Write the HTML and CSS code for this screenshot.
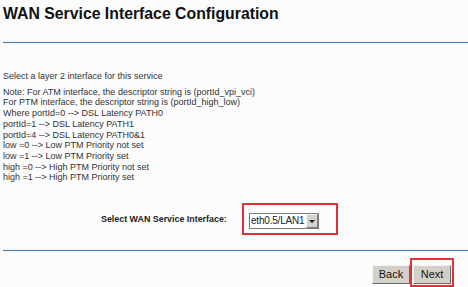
FILE: index.html
```html
<!DOCTYPE html>
<html lang="en">
<head>
  <meta charset="UTF-8">
  <title>WAN Service Interface Configuration</title>
  <link rel="stylesheet" href="styles.css">
</head>
<body>
  <h1 class="title">WAN Service Interface Configuration</h1>
  <div class="rule"></div>

  <div class="notes">
    <p class="lead">Select a layer 2 interface for this service</p>
    <p>Note: For ATM interface, the descriptor string is (portId_vpi_vci)</p>
    <p>For PTM interface, the descriptor string is (portId_high_low)</p>
    <p>Where portId=0 --&gt; DSL Latency PATH0</p>
    <p>portId=1 --&gt; DSL Latency PATH1</p>
    <p>portId=4 --&gt; DSL Latency PATH0&amp;1</p>
    <p>low =0 --&gt; Low PTM Priority not set</p>
    <p>low =1 --&gt; Low PTM Priority set</p>
    <p>high =0 --&gt; High PTM Priority not set</p>
    <p>high =1 --&gt; High PTM Priority set</p>
  </div>

  <div class="select-row">
    <span class="label">Select WAN Service Interface:</span>
    <div class="mark">
      <div class="select">
        <span class="value">eth0.5/LAN1</span>
        <span class="arrow"></span>
      </div>
    </div>
  </div>
  <div class="rule rule-bottom"></div>

  <div class="actions">
    <button class="btn">Back</button>
    <div class="mark mark-btn">
      <button class="btn">Next</button>
    </div>
  </div>
</body>
</html>
```

FILE: styles.css
```css
* {
  margin: 0;
  padding: 0;
  box-sizing: border-box;
}
body {
  background-color: #fcfcfc;
  color: #222;
  font-family: 'Liberation Sans', Arial, sans-serif;
  padding: 0 0 0 3px;
  width: 468px;
  height: 287px;
  overflow: hidden;
}
.title {
  font-size: 15.8px;
  font-weight: bold;
  color: #111;
  padding-top: 4px;
  line-height: 20px;
}
.rule {
  height: 3px;
  border-top: 1px solid #e4f2fa;
  border-bottom: 1px solid #e4f2fa;
  background: #5b7e9c;
  margin-top: 17px;
}
.notes {
  margin-top: 27px;
  font-size: 9px;
  color: #333;
}
.notes p {
  line-height: 10.7px;
}
.notes .lead {
  margin-bottom: 5px;
}
.select-row {
  display: flex;
  align-items: center;
  margin-top: 20px;
  padding-left: 98px;
}
.label {
  flex: none;
  white-space: nowrap;
  font-size: 8.9px;
  font-weight: bold;
  color: #222;
  width: 141px;
}
.mark {
  border: 2px solid #e0303a;
  padding: 8px 17px 4px 5px;
}
.select {
  display: flex;
  align-items: center;
  width: 70px;
  height: 16px;
  border: 1px solid #7a7a7a;
  background: #fff;
}
.value {
  flex: 1;
  min-width: 0;
  white-space: nowrap;
  font-size: 10px;
  letter-spacing: -0.2px;
  color: #222;
  padding-left: 1px;
  line-height: 14px;
}
.arrow {
  flex: none;
  width: 12px;
  height: 14px;
  background: #d6d3ce;
  border: 1px solid;
  border-color: #f4f4f4 #808080 #808080 #f4f4f4;
  position: relative;
}
.arrow::after {
  content: '';
  position: absolute;
  left: 2px;
  top: 5px;
  border-left: 3px solid transparent;
  border-right: 3px solid transparent;
  border-top: 3px solid #111;
}
.rule-bottom {
  margin-top: 14px;
}
.actions {
  display: flex;
  justify-content: flex-end;
  align-items: flex-end;
  padding-right: 14px;
  margin-top: 6px;
}
.btn {
  font-family: 'Liberation Sans', Arial, sans-serif;
  font-size: 11px;
  color: #111;
  background: #d4d0c8;
  border: 1px solid;
  border-color: #f4f4f4 #6a6a6a #6a6a6a #f4f4f4;
  height: 19px;
  width: 38px;
  padding: 0;
}
.actions > .btn {
  margin-bottom: 3px;
}
.mark-btn {
  padding: 4px 1px 1px 1px;
}
```
